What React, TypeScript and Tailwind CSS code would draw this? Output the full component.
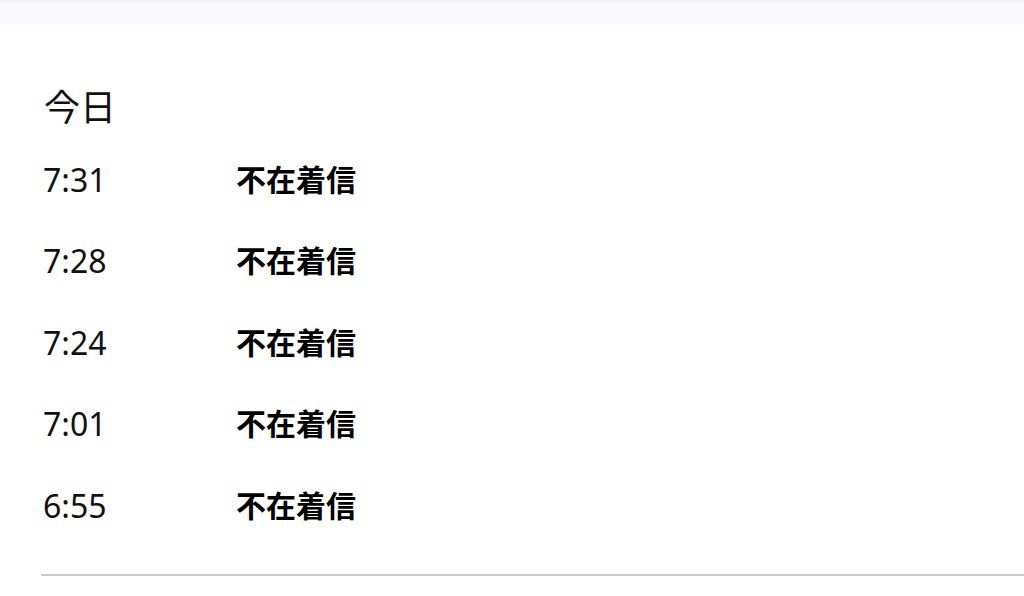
const calls = [
  { time: "7:31", label: "不在着信" },
  { time: "7:28", label: "不在着信" },
  { time: "7:24", label: "不在着信" },
  { time: "7:01", label: "不在着信" },
  { time: "6:55", label: "不在着信" },
];

export default function App() {
  return (
    <div
      className="w-[1024px] h-[596px] bg-white text-black overflow-hidden flex flex-col"
      style={{ fontFamily: '"Noto Sans", "Noto Sans CJK JP", sans-serif' }}
    >
      {/* top bar */}
      <div className="h-[23px] shrink-0 bg-[#f9f9fe] border-t-2 border-[#f3f3f8] shadow-[0_2px_6px_rgba(0,0,0,0.03)]" />

      <div className="pl-[41px] pt-[64px]">
        <h2 className="pl-[3px] text-[36px] leading-[42px] font-normal text-[#111]">今日</h2>

        <ul className="mt-[10px]">
          {calls.map((c) => (
            <li key={c.time} className="h-[81.5px] flex items-center pl-[2px]">
              <span className="w-[193px] text-[32px] leading-none text-[#111]">{c.time}</span>
              <span className="text-[30px] leading-none font-semibold">{c.label}</span>
            </li>
          ))}
        </ul>

        <div className="mt-[27px] h-[2px] bg-[#cbcbcb]" />
      </div>
    </div>
  );
}
